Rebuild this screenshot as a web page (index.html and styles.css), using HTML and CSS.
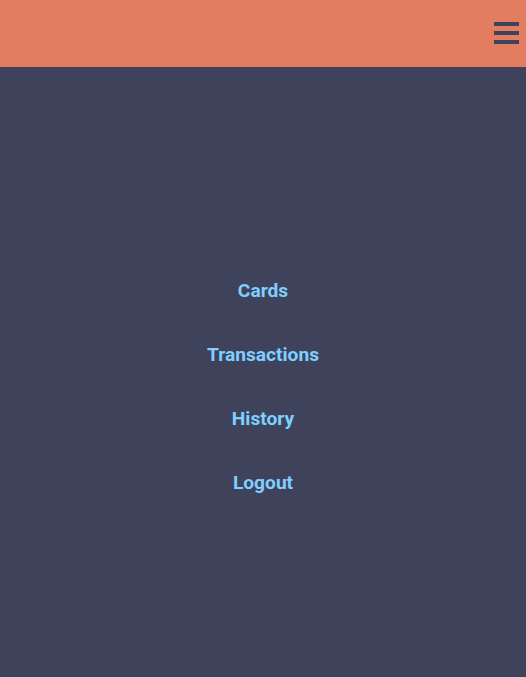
FILE: index.html
```html
<!DOCTYPE html>
<html>
<head>
<meta charset="utf-8">
<link rel="stylesheet" href="styles.css">
</head>
<body>
<header class="topbar">
  <button class="burger" aria-label="Menu">
    <span class="bar"></span>
    <span class="bar"></span>
    <span class="bar"></span>
  </button>
</header>
<main class="menu">
  <nav class="links">
    <a class="link" href="#">Cards</a>
    <a class="link" href="#">Transactions</a>
    <a class="link" href="#">History</a>
    <a class="link" href="#">Logout</a>
  </nav>
</main>
</body>
</html>
```
FILE: styles.css
```css
html, body {
  margin: 0;
  padding: 0;
  height: 100%;
}
body {
  background: #3e425b;
  font-family: Roboto, "Liberation Sans", sans-serif;
  display: flex;
  flex-direction: column;
}
.topbar {
  height: 67px;
  background: #e37d5f;
  display: flex;
  justify-content: flex-end;
  align-items: flex-start;
  flex-shrink: 0;
}
.burger {
  margin: 22px 7px 0 0;
  padding: 0;
  border: 0;
  background: none;
  width: 25px;
  display: flex;
  flex-direction: column;
  gap: 5px;
}
.bar {
  display: block;
  width: 25px;
  height: 4px;
  background: #3e425b;
}
.menu {
  flex: 1;
  padding-top: 191px;
}
.links {
  display: flex;
  flex-direction: column;
  align-items: center;
}
.link {
  height: 64px;
  display: flex;
  align-items: center;
  color: #7fcfff;
  font-weight: 700;
  font-size: 19.2px;
  text-decoration: none;
}
```
